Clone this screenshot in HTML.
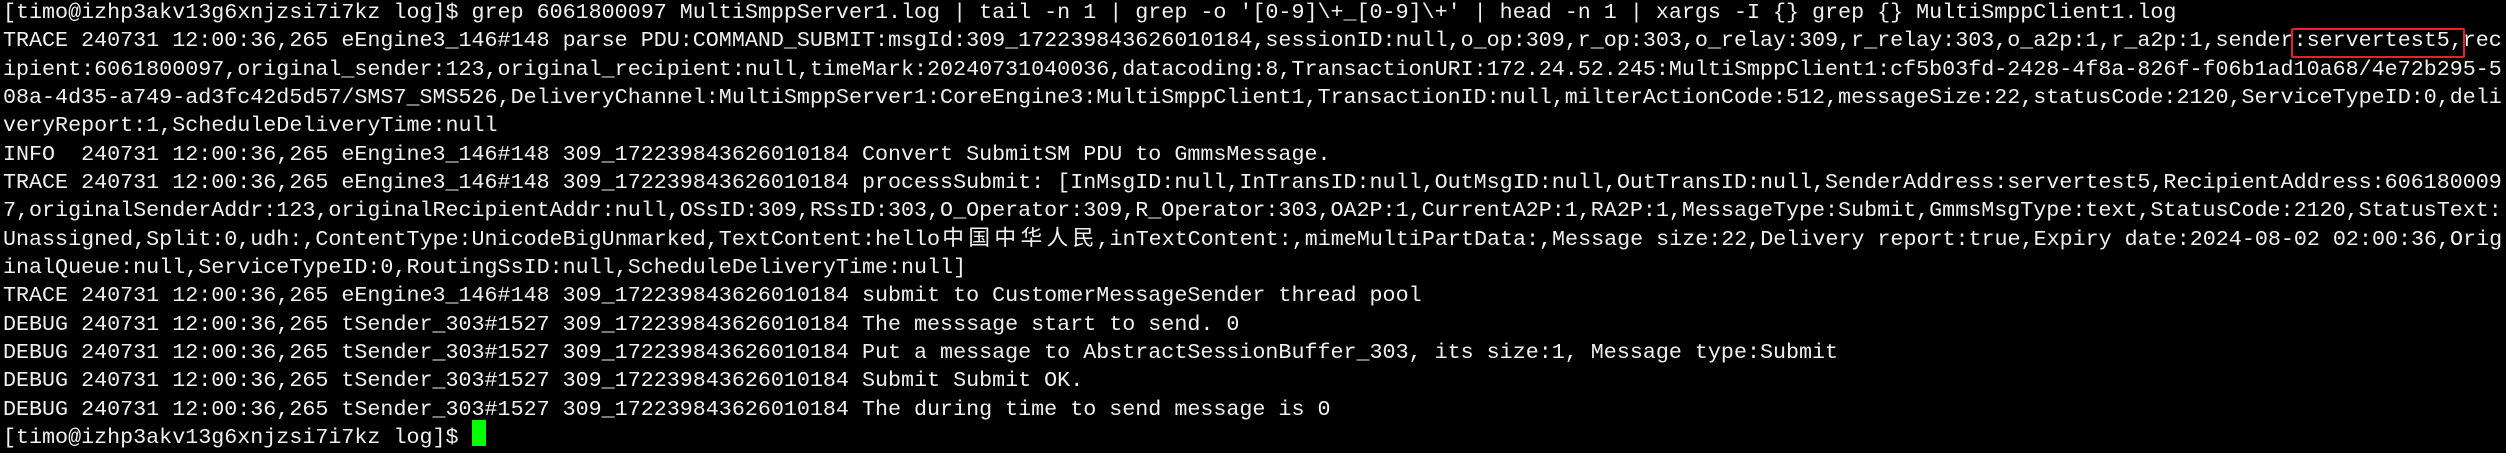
<!DOCTYPE html>
<html><head><meta charset="utf-8">
<style>
html,body{margin:0;padding:0;background:#000;width:2506px;height:448px;overflow:hidden}
pre{margin:0;position:absolute;left:3px;top:-1px;font-family:"Liberation Mono","Noto Sans CJK SC",monospace;font-size:21.7px;line-height:28.35px;color:#f0f0f0;white-space:pre}
.c{display:inline-block;width:26.08px;text-align:center}
.box{position:absolute;left:2291px;top:28px;width:170px;height:26px;border:2px solid #e8202a;border-radius:2px}
.cur{position:absolute;left:472px;top:420px;width:14px;height:26px;background:#00ff00}
</style></head><body>
<pre>[timo@izhp3akv13g6xnjzsi7i7kz log]$ grep 6061800097 MultiSmppServer1.log | tail -n 1 | grep -o '[0-9]\+_[0-9]\+' | head -n 1 | xargs -I {} grep {} MultiSmppClient1.log
TRACE 240731 12:00:36,265 eEngine3_146#148 parse PDU:COMMAND_SUBMIT:msgId:309_172239843626010184,sessionID:null,o_op:309,r_op:303,o_relay:309,r_relay:303,o_a2p:1,r_a2p:1,sender:servertest5,rec
ipient:6061800097,original_sender:123,original_recipient:null,timeMark:20240731040036,datacoding:8,TransactionURI:172.24.52.245:MultiSmppClient1:cf5b03fd-2428-4f8a-826f-f06b1ad10a68/4e72b295-5
08a-4d35-a749-ad3fc42d5d57/SMS7_SMS526,DeliveryChannel:MultiSmppServer1:CoreEngine3:MultiSmppClient1,TransactionID:null,milterActionCode:512,messageSize:22,statusCode:2120,ServiceTypeID:0,deli
veryReport:1,ScheduleDeliveryTime:null
INFO  240731 12:00:36,265 eEngine3_146#148 309_172239843626010184 Convert SubmitSM PDU to GmmsMessage.
TRACE 240731 12:00:36,265 eEngine3_146#148 309_172239843626010184 processSubmit: [InMsgID:null,InTransID:null,OutMsgID:null,OutTransID:null,SenderAddress:servertest5,RecipientAddress:606180009
7,originalSenderAddr:123,originalRecipientAddr:null,OSsID:309,RSsID:303,O_Operator:309,R_Operator:303,OA2P:1,CurrentA2P:1,RA2P:1,MessageType:Submit,GmmsMsgType:text,StatusCode:2120,StatusText:
Unassigned,Split:0,udh:,ContentType:UnicodeBigUnmarked,TextContent:hello<span class="c">中</span><span class="c">国</span><span class="c">中</span><span class="c">华</span><span class="c">人</span><span class="c">民</span>,inTextContent:,mimeMultiPartData:,Message size:22,Delivery report:true,Expiry date:2024-08-02 02:00:36,Orig
inalQueue:null,ServiceTypeID:0,RoutingSsID:null,ScheduleDeliveryTime:null]
TRACE 240731 12:00:36,265 eEngine3_146#148 309_172239843626010184 submit to CustomerMessageSender thread pool
DEBUG 240731 12:00:36,265 tSender_303#1527 309_172239843626010184 The messsage start to send. 0
DEBUG 240731 12:00:36,265 tSender_303#1527 309_172239843626010184 Put a message to AbstractSessionBuffer_303, its size:1, Message type:Submit
DEBUG 240731 12:00:36,265 tSender_303#1527 309_172239843626010184 Submit Submit OK.
DEBUG 240731 12:00:36,265 tSender_303#1527 309_172239843626010184 The during time to send message is 0
[timo@izhp3akv13g6xnjzsi7i7kz log]$ </pre>
<div class="box"></div>
<div class="cur"></div>
</body></html>
